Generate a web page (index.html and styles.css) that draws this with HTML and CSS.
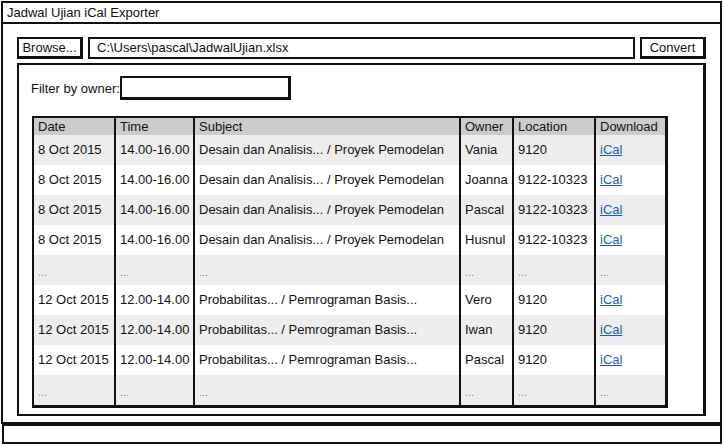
FILE: index.html
```html
<!DOCTYPE html>
<html>
<head>
<meta charset="utf-8">
<link rel="stylesheet" href="styles.css">
</head>
<body>
<div class="window">
  <div class="titlebar">Jadwal Ujian iCal Exporter</div>
  <div class="content">
    <div class="toolbar">
      <div class="btn">Browse...</div>
      <div class="field">C:\Users\pascal\JadwalUjian.xlsx</div>
      <div class="btn">Convert</div>
    </div>
    <div class="panel">
      <div class="filter">
        <span class="label">Filter by owner:</span>
        <div class="input"></div>
      </div>
      <table class="grid">
        <colgroup>
          <col class="c-date"><col class="c-time"><col class="c-subj"><col class="c-owner"><col class="c-loc"><col class="c-dl">
        </colgroup>
        <thead>
          <tr><th>Date</th><th>Time</th><th>Subject</th><th>Owner</th><th>Location</th><th>Download</th></tr>
        </thead>
        <tbody>
          <tr class="alt"><td>8 Oct 2015</td><td>14.00-16.00</td><td>Desain dan Analisis... / Proyek Pemodelan</td><td>Vania</td><td>9120</td><td><a>iCal</a></td></tr>
          <tr><td>8 Oct 2015</td><td>14.00-16.00</td><td>Desain dan Analisis... / Proyek Pemodelan</td><td>Joanna</td><td>9122-10323</td><td><a>iCal</a></td></tr>
          <tr class="alt"><td>8 Oct 2015</td><td>14.00-16.00</td><td>Desain dan Analisis... / Proyek Pemodelan</td><td>Pascal</td><td>9122-10323</td><td><a>iCal</a></td></tr>
          <tr><td>8 Oct 2015</td><td>14.00-16.00</td><td>Desain dan Analisis... / Proyek Pemodelan</td><td>Husnul</td><td>9122-10323</td><td><a>iCal</a></td></tr>
          <tr class="alt dots"><td>...</td><td>...</td><td>...</td><td>...</td><td>...</td><td>...</td></tr>
          <tr><td>12 Oct 2015</td><td>12.00-14.00</td><td>Probabilitas... / Pemrograman Basis...</td><td>Vero</td><td>9120</td><td><a>iCal</a></td></tr>
          <tr class="alt"><td>12 Oct 2015</td><td>12.00-14.00</td><td>Probabilitas... / Pemrograman Basis...</td><td>Iwan</td><td>9120</td><td><a>iCal</a></td></tr>
          <tr><td>12 Oct 2015</td><td>12.00-14.00</td><td>Probabilitas... / Pemrograman Basis...</td><td>Pascal</td><td>9120</td><td><a>iCal</a></td></tr>
          <tr class="alt dots"><td>...</td><td>...</td><td>...</td><td>...</td><td>...</td><td>...</td></tr>
        </tbody>
      </table>
    </div>
  </div>
</div>
<div class="statusbar"></div>
</body>
</html>
```
FILE: styles.css
```css
* { box-sizing: border-box; }
html, body { margin: 0; padding: 0; background: #fff; }
body {
  font-family: "Liberation Sans", Arial, sans-serif;
  font-size: 13px;
  color: #111;
  width: 724px;
  height: 446px;
  padding: 1px 2px 0 1px;
}
.window {
  border: 2px solid #111;
  height: 423px;
  display: flex;
  flex-direction: column;
}
.titlebar {
  height: 21px;
  border-bottom: 2px solid #111;
  padding: 2px 0 0 4px;
  line-height: 16px;
}
.content {
  padding: 13px 14px 0 14px;
  display: flex;
  flex-direction: column;
}
.toolbar {
  display: flex;
  gap: 5px;
  height: 22px;
}
.btn {
  width: 66px;
  border: 2px solid #111;
  border-right-width: 3px;
  border-bottom-width: 3px;
  text-align: center;
  line-height: 17px;
}
.field {
  flex: 1;
  border: 2px solid #111;
  padding-left: 7px;
  line-height: 18px;
}
.panel {
  margin-top: 4px;
  border: 2px solid #111;
  border-right-width: 3px;
  height: 353px;
  padding: 11px 0 0 12px;
}
.filter {
  display: flex;
  align-items: center;
  height: 24px;
}
.input {
  width: 171px;
  height: 24px;
  border: 2px solid #111;
  border-right-width: 3px;
  border-bottom-width: 3px;
}
.grid {
  margin: 16px 0 0 1px;
  width: 633px;
  border-collapse: collapse;
  table-layout: fixed;
  border: 2px solid #111;
  border-right-width: 3px;
  border-bottom-width: 3px;
}
.c-date { width: 82px; }
.c-time { width: 79px; }
.c-subj { width: 266px; }
.c-owner { width: 53px; }
.c-loc { width: 82px; }
.c-dl { width: 71px; }
.grid th, .grid td {
  border-left: 2px solid #111;
  text-align: left;
  padding: 0 0 0 4px;
  white-space: nowrap;
  overflow: hidden;
}
.grid th:first-child, .grid td:first-child { border-left: none; }
.grid th {
  background: #cccccc;
  font-weight: normal;
  height: 18px;
  line-height: 16px;
}
.grid td {
  height: 30px;
  line-height: 30px;
  background: #fff;
}
.grid tr.alt td { background: #eeeeee; }
.grid tr.dots td {
  color: #888;
  font-size: 11px;
  line-height: 26px;
  padding-top: 4px;
}
.grid a {
  color: #1a5fb4;
  text-decoration: underline;
}
.statusbar {
  height: 20px;
  border: 2px solid #111;
  margin-left: 1px;
}
```
